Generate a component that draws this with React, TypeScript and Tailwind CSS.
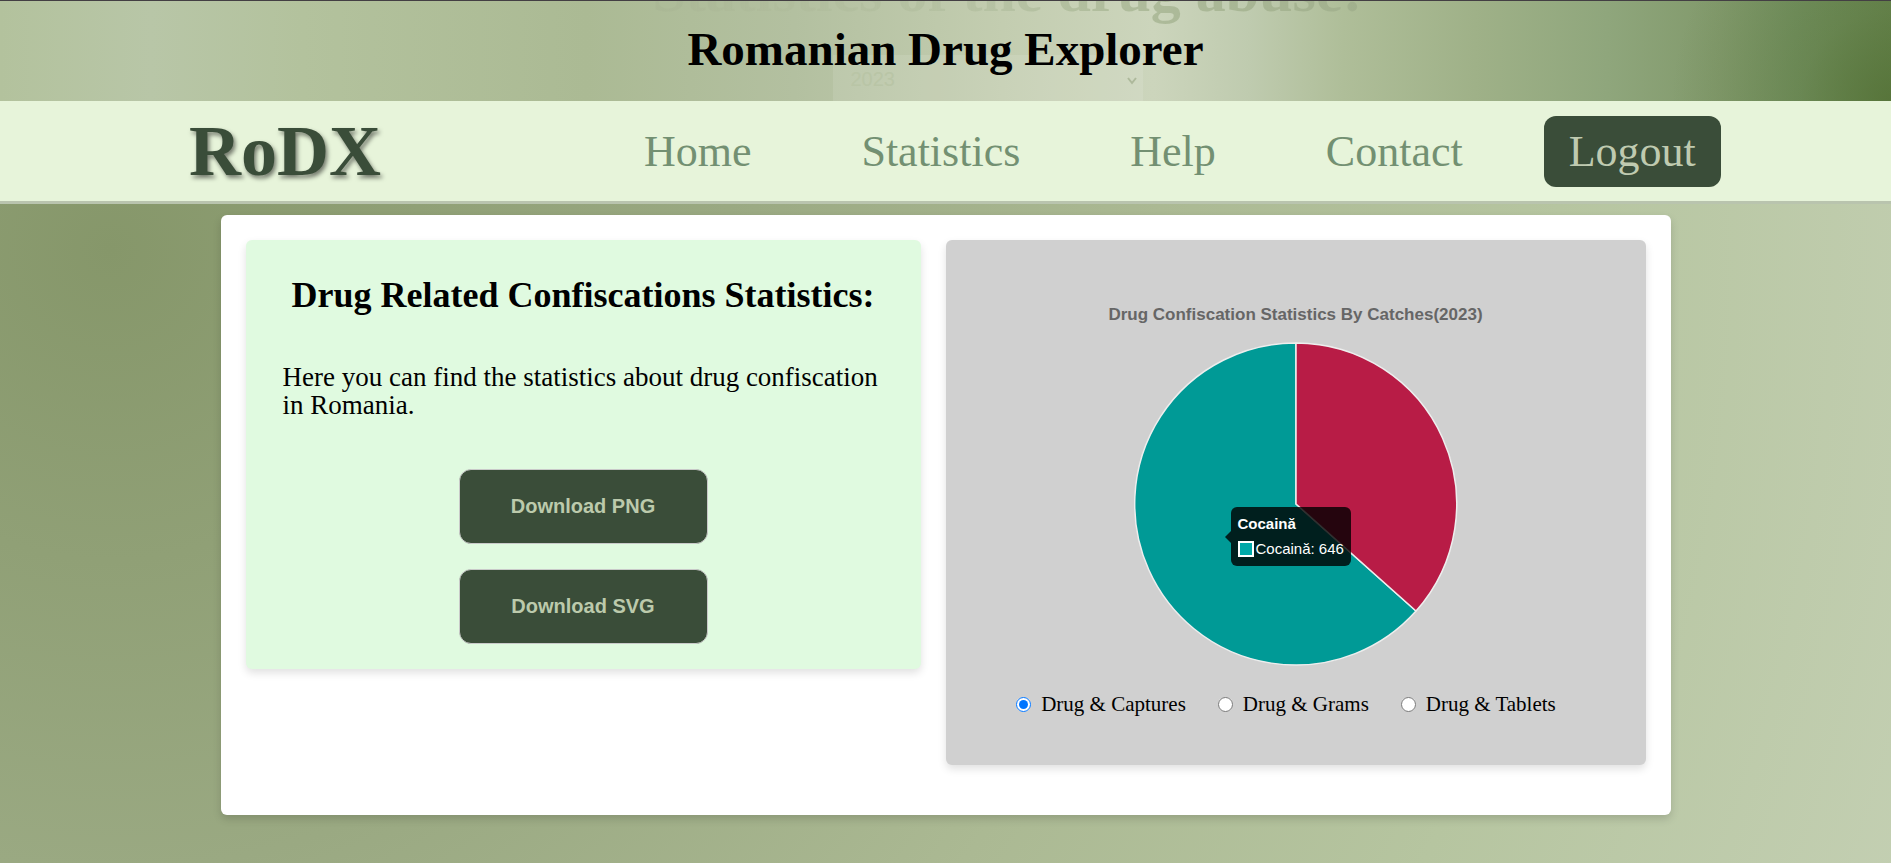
import { useState } from "react";

const links = ["Home", "Statistics", "Help", "Contact"];
const modes = ["Drug & Captures", "Drug & Grams", "Drug & Tablets"];

function Header() {
  return (
    <header className="relative flex h-[101px] items-center justify-center overflow-hidden border-t border-[#433f43] bg-[radial-gradient(circle_at_100%_100%,rgba(80,110,50,0.7)_0px,rgba(80,110,50,0.25)_90px,rgba(80,110,50,0)_220px),linear-gradient(to_right,#b3c29d_0%,#b8c6a7_8%,#b3c29d_16%,#abba94_31%,#b3c0a0_42%,#c3cdb0_53%,#ccd5bc_61%,#bfcbaf_66%,#afbe99_71%,#9fb188_78%,#8fa67c_85%,#81996b_91%,#73905f_95%,#68854f_100%)]">
      <p
        aria-hidden="true"
        className="absolute -top-[46px] left-1/2 ml-[62px] -translate-x-1/2 bg-linear-to-r from-[#a8b593]/60 via-[#b6c2a3] to-[#a1b08d] bg-clip-text text-[60px]/[72px] font-bold whitespace-nowrap text-transparent"
      >
        Statistics of the drug abuse:
      </p>
      <div className="absolute top-[54px] left-1/2 h-12 w-[310px] -translate-x-[113px] bg-white/10">
        <select
          aria-label="Year"
          className="h-full w-full appearance-none bg-transparent px-[18px] font-['Liberation_Sans',sans-serif] text-xl text-[#b9c5a6]"
        >
          <option>2023</option>
        </select>
        <svg className="absolute top-[21px] right-[5px] h-[10px] w-3" viewBox="0 0 12 10" fill="none" stroke="#adb99b" strokeWidth="2">
          <path d="M2 2l4 5 4-5" />
        </svg>
      </div>
      <h1 className="relative pb-1 text-[47px]/[52px] font-bold">Romanian Drug Explorer</h1>
    </header>
  );
}

function Nav() {
  return (
    <nav className="flex h-[103px] items-center justify-between border-b-3 border-[#b9c4ae] bg-[#e7f4da] pr-[9%] pl-[10%]">
      <a href="#" className="text-[72px]/[80px] font-bold text-[#3a4d39] [text-shadow:2px_3px_4px_rgba(0,0,0,0.5)]">
        RoDX
      </a>
      <div className="flex items-center gap-[60px] text-[44px]/[51px] text-[#739072]">
        {links.map((l) => (
          <a key={l} href="#" className="px-[25px]">
            {l}
          </a>
        ))}
        <a href="#" className="-ml-1 rounded-xl bg-[#3a4d39] px-[25px] py-[10px] text-[#bfcab0]">
          Logout
        </a>
      </div>
    </nav>
  );
}

function DownloadButton({ label }: { label: string }) {
  return (
    <button
      type="button"
      className="h-[75px] w-[249px] rounded-xl border border-[#c9c9c9] bg-[#3a4d39] pb-[2px] font-['Liberation_Sans',sans-serif] text-xl font-bold text-[#bccaac]"
    >
      {label}
    </button>
  );
}

function Pie() {
  return (
    <div className="relative h-[324px] w-[324px]">
      <svg viewBox="0 0 324 324" className="h-full w-full" stroke="#eeeeee" strokeWidth="1.5" strokeLinejoin="round">
        <path d="M162 162L282 269A161 161 0 1 1 162 1Z" fill="#009a96" />
        <path d="M162 162V1A161 161 0 0 1 282 269Z" fill="#b81c46" />
      </svg>
      <div className="absolute top-[165px] left-[97px] rounded-md bg-black/80 px-[7px] py-2 font-['Liberation_Sans',sans-serif] text-[15px]/[18px] whitespace-nowrap text-white">
        <svg className="absolute top-6 -left-[6px] h-3 w-[6px]" viewBox="0 0 6 12">
          <path d="M6 0L0 6l6 6z" fill="#000" fillOpacity="0.8" />
        </svg>
        <p className="font-bold">Cocaină</p>
        <p className="mt-[7px] flex items-center gap-[2px]">
          <span className="size-4 border-2 border-white bg-[#00a9a9]" />
          Cocaină: 646
        </p>
      </div>
    </div>
  );
}

export default function App() {
  const [mode, setMode] = useState(modes[0]);
  return (
    <div className="min-h-screen bg-[radial-gradient(circle_at_110px_250px,#86976a_0px,#9aa982_620px,#abb993_1050px,#b6c5a0_1450px,#c3cfb2_1900px)] font-['Liberation_Serif',serif] text-black">
      <Header />
      <Nav />
      <main className="mx-auto mt-[11px] grid w-full max-w-[1450px] grid-cols-[27fr_28fr] items-start gap-[25px] rounded-md bg-white px-[25px] pt-[25px] pb-[50px] shadow-[0_4px_8px_rgba(0,0,0,0.15)]">
        <section className="flex flex-col items-center rounded-md bg-[#e0fae0] px-[37px] pt-[34px] pb-[25px] shadow-[0_4px_8px_rgba(0,0,0,0.12)]">
          <h2 className="text-[36px]/[42px] font-bold whitespace-nowrap">Drug Related Confiscations Statistics:</h2>
          <p className="mt-[47px] w-full text-[27px]/[28px]">
            Here you can find the statistics about drug confiscation in Romania.
          </p>
          <div className="mt-[50px] flex flex-col gap-[25px]">
            <DownloadButton label="Download PNG" />
            <DownloadButton label="Download SVG" />
          </div>
        </section>
        <section className="flex flex-col items-center rounded-md bg-[#d0d0d0] pt-[61px] pb-[48px] shadow-[0_4px_8px_rgba(0,0,0,0.12)]">
          <h3 className="font-['Liberation_Sans',sans-serif] text-[17px]/[28px] font-bold text-[#666]">
            Drug Confiscation Statistics By Catches(2023)
          </h3>
          <div className="mt-[13px]">
            <Pie />
          </div>
          <div className="mt-[25px] mr-[19px] flex gap-8 text-[21px]/[26px]">
            {modes.map((m) => (
              <label key={m} className="flex items-center gap-[10px]">
                <input
                  type="radio"
                  name="mode"
                  checked={mode === m}
                  onChange={() => setMode(m)}
                  className="size-[15px] accent-[#0075ff]"
                />
                {m}
              </label>
            ))}
          </div>
        </section>
      </main>
    </div>
  );
}
